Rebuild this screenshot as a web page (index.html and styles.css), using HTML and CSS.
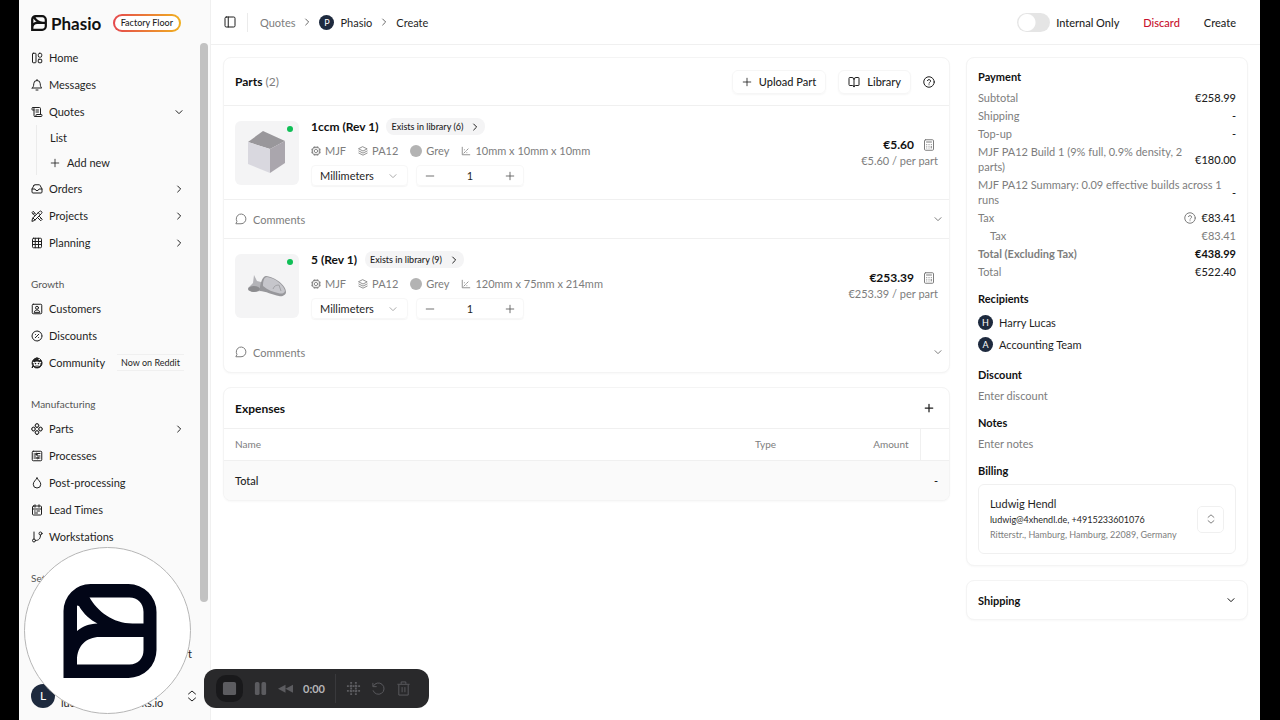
FILE: index.html
```html
<!DOCTYPE html>
<html lang="en">
<head>
    <meta charset="UTF-8">
    <meta name="viewport" content="width=device-width, initial-scale=1.0">
    <title>Create Quote - Phasio</title>
    <link rel="stylesheet" href="styles.css">
</head>
<body>
    <!-- Icon sprite -->
    <svg class="sprite" aria-hidden="true">
        <symbol id="i-logo" viewBox="0 0 93 94"><path fill="currentColor" stroke="none" fill-rule="evenodd" d="M0 94V27A27 27 0 0 1 27 0H65A28 28 0 0 1 93 28V66A28 28 0 0 1 65 94ZM26 13.500C34 27 49 39.500 69 39.500H80V28C80 19 74 13.500 66 13.500ZM13.500 21.500V47C20 42 25 40 34 39.500C27 36 20 30 15.500 22ZM13.500 80.500H66C75 80.500 80 74 80 66V53H36C23 53 13.500 62 13.500 76Z"/></symbol>
        <symbol id="i-home" viewBox="0 0 24 24"><rect x="3" y="2.500" width="7" height="19" rx="1.500"/><rect x="14.500" y="2.500" width="7" height="8" rx="3"/><rect x="14.500" y="14.500" width="7" height="7" rx="1.500"/></symbol>
        <symbol id="i-bell" viewBox="0 0 24 24"><path d="M10 22h4M2.500 18h19c-2-2-3-4-3-8.500a6.500 6.500 0 0 0-13 0c0 4.500-1 6.500-3 8.500ZM12 2.500V1"/></symbol>
        <symbol id="i-scroll" viewBox="0 0 24 24"><path d="M15 12h-5M15 8h-5M19 17V5a2 2 0 0 0-2-2H4"/><path d="M8 21h12a2 2 0 0 0 2-2v-1a1 1 0 0 0-1-1H11a1 1 0 0 0-1 1v1a2 2 0 1 1-4 0V5a2 2 0 1 0-4 0v2a1 1 0 0 0 1 1h3"/></symbol>
        <symbol id="i-inbox" viewBox="0 0 24 24"><path d="M22 12h-6l-2 3h-4l-2-3H2"/><path d="M6 4.500 2 12v6a2 2 0 0 0 2 2h16a2 2 0 0 0 2-2v-6l-4-7.500a2 2 0 0 0-2-1H8a2 2 0 0 0-2 1Z"/></symbol>
        <symbol id="i-tools" viewBox="0 0 24 24"><path d="M9.500 8.500 4.500 2.500 1.800 5.500 7.500 11M14 16l5.500 5.500 3-3L17 13M5 8l1.500-1.500M17 19l1.500-1.500"/><path d="m2 22 1-5.500L17 3a2.800 2.800 0 0 1 4 4L7.500 20.500ZM14.500 5.500l4 4M4 16l4 4"/></symbol>
        <symbol id="i-table" viewBox="0 0 24 24"><rect x="3" y="2.500" width="18" height="19" rx="2"/><path d="M8.500 2.500v19M15 2.500v19M3 9h18M3 15h18"/></symbol>
        <symbol id="i-contact" viewBox="0 0 24 24"><rect x="2.500" y="2.500" width="19" height="19" rx="2"/><circle cx="12" cy="9.500" r="3"/><path d="M6.500 18c1-3 3-4 5.500-4s4.500 1 5.500 4Z"/></symbol>
        <symbol id="i-percent" viewBox="0 0 24 24"><circle cx="12" cy="12" r="10" stroke-dasharray="6.500 1.300"/><path d="m15.500 8.500-7 7M8.800 9h.1M15.200 15h.1"/></symbol>
        <symbol id="i-reddit" viewBox="0 0 24 24"><path fill="currentColor" d="M12 2a10 10 0 1 1-7 17l-3 3 1.500-5A10 10 0 0 1 12 2Z"/><ellipse cx="12" cy="14" rx="7" ry="5" fill="#fff" stroke="none"/><circle cx="5" cy="11" r="1.500" fill="#fff" stroke="none"/><circle cx="19" cy="11" r="1.500" fill="#fff" stroke="none"/><circle cx="16.500" cy="5" r="1.500" fill="#fff" stroke="none"/><circle cx="9" cy="13" r="1.600" fill="currentColor" stroke="none"/><circle cx="15" cy="13" r="1.600" fill="currentColor" stroke="none"/><path d="M9 16.500c2 1.200 4 1.200 6 0" stroke-width="1"/></symbol>
        <symbol id="i-parts" viewBox="0 0 24 24"><rect x="8.800" y="1.800" width="6.400" height="6.400" rx="2" transform="rotate(45 12 5)"/><rect x="8.800" y="15.800" width="6.400" height="6.400" rx="2" transform="rotate(45 12 19)"/><rect x="1.800" y="8.800" width="6.400" height="6.400" rx="2" transform="rotate(45 5 12)"/><rect x="15.800" y="8.800" width="6.400" height="6.400" rx="2" transform="rotate(45 19 12)"/></symbol>
        <symbol id="i-process" viewBox="0 0 24 24"><rect x="2.500" y="2.500" width="19" height="19" rx="2"/><path d="M6 8h4l3 4h5M6 12h3M6 16h5M15 16h3M12 7h6"/><circle cx="13" cy="16" r="1.500"/><circle cx="11" cy="8" r="1.500"/></symbol>
        <symbol id="i-drop" viewBox="0 0 24 24"><path d="M12 2c2 4 7.500 7.500 7.500 12.500a7.500 7.500 0 0 1-15 0C4.500 9.500 10 6 12 2Z"/></symbol>
        <symbol id="i-calendar" viewBox="0 0 24 24"><rect x="3" y="4" width="18" height="18" rx="2"/><path d="M8 1.500v5M16 1.500v5M3 10h18M12 14h5M7 14h1.500M7 18h6"/></symbol>
        <symbol id="i-branch" viewBox="0 0 24 24"><path d="M6 2v14"/><circle cx="19" cy="5" r="3"/><circle cx="6" cy="19" r="3"/><path d="M19 8c0 7-3 11-10 11"/></symbol>
        <symbol id="i-down" viewBox="0 0 24 24"><path d="m3 8 9 9 9-9"/></symbol>
        <symbol id="i-right" viewBox="0 0 24 24"><path d="m8 3 9 9-9 9"/></symbol>
        <symbol id="i-updown" viewBox="0 0 24 24"><path d="m5 8 7-6 7 6M5 16l7 6 7-6"/></symbol>
        <symbol id="i-plus" viewBox="0 0 24 24"><path d="M3 12h18M12 3v18"/></symbol>
        <symbol id="i-minus" viewBox="0 0 24 24"><path d="M3 12h18"/></symbol>
        <symbol id="i-panel" viewBox="0 0 24 24"><rect x="2" y="2" width="20" height="20" rx="2.500"/><path d="M8.500 2v20"/></symbol>
        <symbol id="i-book" viewBox="0 0 24 24"><path d="M12 6.500v15M2 4a1 1 0 0 1 1-1h5a4 4 0 0 1 4 4 4 4 0 0 1 4-4h5a1 1 0 0 1 1 1v14a1 1 0 0 1-1 1h-6a3 3 0 0 0-3 3 3 3 0 0 0-3-3H3a1 1 0 0 1-1-1Z"/></symbol>
        <symbol id="i-help" viewBox="0 0 24 24"><circle cx="12" cy="12" r="10.500"/><path d="M8.800 9.300a3.300 3.300 0 0 1 6.400 1c0 2-3.200 2.500-3.200 4M12 17.500h.1"/></symbol>
        <symbol id="i-chip" viewBox="0 0 24 24"><rect x="4" y="4" width="16" height="16" rx="3"/><circle cx="12" cy="12" r="4"/><path d="M8 1.500V4M12 1.500V4M16 1.500V4M8 20v2.500M12 20v2.500M16 20v2.500M1.500 8H4M1.500 12H4M1.500 16H4M20 8h2.500M20 12h2.500M20 16h2.500"/></symbol>
        <symbol id="i-layers" viewBox="0 0 24 24"><path d="m12 2 10 5-10 5L2 7ZM2 12l10 5 10-5M2 17l10 5 10-5"/></symbol>
        <symbol id="i-axis" viewBox="0 0 24 24"><path d="M3 3v18h18M7 17l2-2M11 13l2-2M15 9l2-2M14 16h.1M8 9h.1"/></symbol>
        <symbol id="i-calc" viewBox="0 0 24 24"><rect x="3" y="1.500" width="18" height="21" rx="2"/><path d="M7 6h10M7.500 11h.1M12 11h.1M16.500 11h.1M7.500 14.500h.1M12 14.500h.1M16.500 14.500V18M7.500 18h.1M12 18h.1"/></symbol>
        <symbol id="i-comment" viewBox="0 0 24 24"><path d="M2.500 21.500h9.500a9.700 9.700 0 1 0-8.500-5.200Z"/></symbol>
    </svg>

    <div class="app">
        <aside class="sidebar">
            <div class="brand">
                <svg class="brand-mark"><use href="#i-logo"/></svg>
                <span class="brand-name">Phasio</span>
                <span class="brand-badge">Factory Floor</span>
            </div>

            <div class="nav-scroll">
                <nav class="nav">
                    <a class="nav-item" href="#"><svg class="icon"><use href="#i-home"/></svg>Home</a>
                    <a class="nav-item" href="#"><svg class="icon"><use href="#i-bell"/></svg>Messages</a>
                    <a class="nav-item" href="#"><svg class="icon"><use href="#i-scroll"/></svg>Quotes<svg class="icon tiny chevron"><use href="#i-down"/></svg></a>
                    <div class="subnav">
                        <a class="subnav-item" href="#">List</a>
                        <a class="subnav-item" href="#"><svg class="icon small"><use href="#i-plus"/></svg>Add new</a>
                    </div>
                    <a class="nav-item" href="#"><svg class="icon"><use href="#i-inbox"/></svg>Orders<svg class="icon tiny chevron"><use href="#i-right"/></svg></a>
                    <a class="nav-item" href="#"><svg class="icon"><use href="#i-tools"/></svg>Projects<svg class="icon tiny chevron"><use href="#i-right"/></svg></a>
                    <a class="nav-item" href="#"><svg class="icon"><use href="#i-table"/></svg>Planning<svg class="icon tiny chevron"><use href="#i-right"/></svg></a>

                    <div class="nav-label">Growth</div>
                    <a class="nav-item" href="#"><svg class="icon"><use href="#i-contact"/></svg>Customers</a>
                    <a class="nav-item" href="#"><svg class="icon"><use href="#i-percent"/></svg>Discounts</a>
                    <a class="nav-item" href="#"><svg class="icon"><use href="#i-reddit"/></svg>Community<span class="nav-badge">Now on Reddit</span></a>

                    <div class="nav-label">Manufacturing</div>
                    <a class="nav-item" href="#"><svg class="icon"><use href="#i-parts"/></svg>Parts<svg class="icon tiny chevron"><use href="#i-right"/></svg></a>
                    <a class="nav-item" href="#"><svg class="icon"><use href="#i-process"/></svg>Processes</a>
                    <a class="nav-item" href="#"><svg class="icon"><use href="#i-drop"/></svg>Post-processing</a>
                    <a class="nav-item" href="#"><svg class="icon"><use href="#i-calendar"/></svg>Lead Times</a>
                    <a class="nav-item" href="#"><svg class="icon"><use href="#i-branch"/></svg>Workstations</a>

                    <div class="nav-label">Settings</div>
                </nav>
                <div class="scrollbar"></div>
            </div>

            <div class="sidebar-footer">
                <a class="support" href="#">Support</a>
                <button class="account" type="button">
                    <span class="avatar avatar-large">L</span>
                    <span class="account-email">lucas.h@partworks.io</span>
                    <svg class="icon"><use href="#i-updown"/></svg>
                </button>
            </div>
        </aside>

        <main class="main">
            <header class="topbar">
                <button class="icon-button" type="button" aria-label="Toggle sidebar"><svg class="icon"><use href="#i-panel"/></svg></button>
                <span class="divider"></span>
                <nav class="breadcrumb">
                    <a class="muted" href="#">Quotes</a>
                    <svg class="icon tiny"><use href="#i-right"/></svg>
                    <a class="crumb-company" href="#"><span class="avatar">P</span>Phasio</a>
                    <svg class="icon tiny"><use href="#i-right"/></svg>
                    <span>Create</span>
                </nav>
                <div class="actions">
                    <label class="toggle"><input type="checkbox">Internal Only</label>
                    <button class="text-button danger" type="button">Discard</button>
                    <button class="text-button" type="button">Create</button>
                </div>
            </header>

            <div class="content">
                <div class="column">
                    <section class="card">
                        <div class="parts-header">
                            <h2>Parts <span class="count">(2)</span></h2>
                            <button class="outline-button" type="button"><svg class="icon small"><use href="#i-plus"/></svg>Upload Part</button>
                            <button class="outline-button" type="button"><svg class="icon"><use href="#i-book"/></svg>Library</button>
                            <button class="icon-button" type="button" aria-label="Help"><svg class="icon"><use href="#i-help"/></svg></button>
                        </div>

                        <article class="part">
                            <div class="thumb">
                                <svg viewBox="0 0 64 64">
                                    <path fill="#99979b" d="M13 21 28 10 50 20 35 28Z"/>
                                    <path fill="#d9d8df" d="M13 21 35 28V52L13 43Z"/>
                                    <path fill="#aaa6ad" d="M35 28 50 20V42L35 52Z"/>
                                </svg>
                                <span class="dot"></span>
                            </div>
                            <div class="part-info">
                                <div class="part-title">
                                    <h3>1ccm (Rev 1)</h3>
                                    <button class="pill" type="button">Exists in library (6)<svg class="icon tiny"><use href="#i-right"/></svg></button>
                                </div>
                                <div class="part-meta">
                                    <span><svg class="icon small"><use href="#i-chip"/></svg>MJF</span>
                                    <span><svg class="icon small"><use href="#i-layers"/></svg>PA12</span>
                                    <span><i class="swatch"></i>Grey</span>
                                    <span><svg class="icon small"><use href="#i-axis"/></svg>10mm x 10mm x 10mm</span>
                                </div>
                                <div class="part-controls">
                                    <div class="select">
                                        <select aria-label="Units"><option>Millimeters</option><option>Inches</option></select>
                                        <svg class="icon tiny"><use href="#i-down"/></svg>
                                    </div>
                                    <div class="stepper">
                                        <button type="button" aria-label="Decrease"><svg class="icon small"><use href="#i-minus"/></svg></button>
                                        <input type="text" value="1" aria-label="Quantity">
                                        <button type="button" aria-label="Increase"><svg class="icon small"><use href="#i-plus"/></svg></button>
                                    </div>
                                </div>
                            </div>
                            <div class="price">
                                <div class="price-total">€5.60<svg class="icon"><use href="#i-calc"/></svg></div>
                                <div class="price-unit">€5.60 / per part</div>
                            </div>
                        </article>
                        <button class="comments bordered" type="button"><svg class="icon"><use href="#i-comment"/></svg>Comments<svg class="icon tiny"><use href="#i-down"/></svg></button>

                        <article class="part">
                            <div class="thumb">
                                <svg viewBox="0 0 64 64">
                                    <path fill="#b4b4b8" d="M13 34 18 29 19 21 22 27 30 29 26 37 17 38Z"/>
                                    <ellipse cx="19" cy="35" rx="6" ry="3" fill="#8c8c8f"/>
                                    <path fill="#97979b" d="M25 33C26 27 28 22 31 22C40 23 51 31 51 38C51 41 47 43 44 42C38 41 30 37 25 37Z"/>
                                    <path fill="#c6c6cb" d="M28 32C28 27 29 23 32 23C40 24 49 31 50 37C49 40 46 40 43 39C38 38 33 36 28 32Z"/>
                                    <path fill="none" stroke="#a3a3a7" d="M38 35C39 32 41 31 44 31L46 37"/>
                                </svg>
                                <span class="dot"></span>
                            </div>
                            <div class="part-info">
                                <div class="part-title">
                                    <h3>5 (Rev 1)</h3>
                                    <button class="pill" type="button">Exists in library (9)<svg class="icon tiny"><use href="#i-right"/></svg></button>
                                </div>
                                <div class="part-meta">
                                    <span><svg class="icon small"><use href="#i-chip"/></svg>MJF</span>
                                    <span><svg class="icon small"><use href="#i-layers"/></svg>PA12</span>
                                    <span><i class="swatch"></i>Grey</span>
                                    <span><svg class="icon small"><use href="#i-axis"/></svg>120mm x 75mm x 214mm</span>
                                </div>
                                <div class="part-controls">
                                    <div class="select">
                                        <select aria-label="Units"><option>Millimeters</option><option>Inches</option></select>
                                        <svg class="icon tiny"><use href="#i-down"/></svg>
                                    </div>
                                    <div class="stepper">
                                        <button type="button" aria-label="Decrease"><svg class="icon small"><use href="#i-minus"/></svg></button>
                                        <input type="text" value="1" aria-label="Quantity">
                                        <button type="button" aria-label="Increase"><svg class="icon small"><use href="#i-plus"/></svg></button>
                                    </div>
                                </div>
                            </div>
                            <div class="price">
                                <div class="price-total">€253.39<svg class="icon"><use href="#i-calc"/></svg></div>
                                <div class="price-unit">€253.39 / per part</div>
                            </div>
                        </article>
                        <button class="comments" type="button"><svg class="icon"><use href="#i-comment"/></svg>Comments<svg class="icon tiny"><use href="#i-down"/></svg></button>
                    </section>

                    <section class="card">
                        <div class="expenses-header">
                            <h2>Expenses</h2>
                            <button class="icon-button" type="button" aria-label="Add expense"><svg class="icon small bold"><use href="#i-plus"/></svg></button>
                        </div>
                        <table class="expenses">
                            <thead>
                                <tr><th>Name</th><th class="col-type">Type</th><th class="col-amount">Amount</th><th class="col-action"></th></tr>
                            </thead>
                            <tfoot>
                                <tr><td colspan="2">Total</td><td class="col-total" colspan="2">-</td></tr>
                            </tfoot>
                        </table>
                    </section>
                </div>

                <div class="column side">
                    <section class="card summary">
                        <h4>Payment</h4>
                        <dl class="payment">
                            <div><dt>Subtotal</dt><dd>€258.99</dd></div>
                            <div><dt>Shipping</dt><dd>-</dd></div>
                            <div><dt>Top-up</dt><dd>-</dd></div>
                            <div><dt>MJF PA12 Build 1 (9% full, 0.9% density, 2 parts)</dt><dd>€180.00</dd></div>
                            <div><dt>MJF PA12 Summary: 0.09 effective builds across 1 runs</dt><dd>-</dd></div>
                            <div><dt>Tax</dt><dd><svg class="icon"><use href="#i-help"/></svg>€83.41</dd></div>
                            <div class="sub"><dt>Tax</dt><dd>€83.41</dd></div>
                            <div class="strong"><dt>Total (Excluding Tax)</dt><dd>€438.99</dd></div>
                            <div><dt>Total</dt><dd>€522.40</dd></div>
                        </dl>

                        <h4>Recipients</h4>
                        <ul class="recipients">
                            <li><span class="avatar">H</span>Harry Lucas</li>
                            <li><span class="avatar">A</span>Accounting Team</li>
                        </ul>

                        <h4><label for="discount">Discount</label></h4>
                        <input class="plain-input" id="discount" type="text" placeholder="Enter discount">

                        <h4><label for="notes">Notes</label></h4>
                        <input class="plain-input" id="notes" type="text" placeholder="Enter notes">

                        <h4>Billing</h4>
                        <div class="billing">
                            <div class="billing-text">
                                <div class="billing-name">Ludwig Hendl</div>
                                <div>ludwig@4xhendl.de, +4915233601076</div>
                                <div class="muted">Ritterstr., Hamburg, Hamburg, 22089, Germany</div>
                            </div>
                            <button class="square-button" type="button" aria-label="Change billing address"><svg class="icon small"><use href="#i-updown"/></svg></button>
                        </div>
                    </section>

                    <button class="card shipping" type="button">Shipping<svg class="icon tiny"><use href="#i-down"/></svg></button>
                </div>
            </div>
        </main>
    </div>

    <!-- Camera bubble and recorder controls float over the page -->
    <div class="bubble"><svg><use href="#i-logo"/></svg></div>

    <div class="recorder">
        <button class="stop" type="button" aria-label="Stop"><svg viewBox="0 0 16 16"><rect x="1" y="1" width="14" height="14" rx="2"/></svg></button>
        <button type="button" aria-label="Pause"><svg viewBox="0 0 16 16"><rect x="2" y="1" width="5" height="14" rx="2"/><rect x="9" y="1" width="5" height="14" rx="2"/></svg></button>
        <button type="button" aria-label="Rewind"><svg viewBox="0 0 16 16"><path d="M8 4v8.500L0 8.200ZM16 4v8.500L8 8.200Z"/></svg></button>
        <span class="time">0:00</span>
        <span class="recorder-divider"></span>
        <button type="button" aria-label="Effects"><svg viewBox="0 0 16 16"><path class="line dots" d="M5.500 1v14M10.500 1v14M1 5.500h14M1 10.500h14"/></svg></button>
        <button type="button" aria-label="Restart"><svg viewBox="0 0 16 16"><path class="line" d="M2 2v4h4M2.500 5.500a6 6 0 1 1-.3 4.500"/></svg></button>
        <button type="button" aria-label="Delete"><svg viewBox="0 0 16 16"><path class="line" d="M1.500 3.500h13M5.500 3V1h5v2M3 4v11h10V4M6.500 6.500v5.500M9.500 6.500v5.500"/></svg></button>
    </div>
</body>
</html>
```

FILE: styles.css
```css
* {
    box-sizing: border-box;
}
body {
    margin: 0;
    padding: 0 20px 0 19px;
    height: 100vh;
    overflow: hidden;
    background-color: #000;
    font-family: Lato, "Liberation Sans", sans-serif;
    font-size: 11px;
    line-height: 15px;
    color: #1f1f1f;
}
h2, h3, h4, dl, dd, ul {
    margin: 0;
    padding: 0;
}
a {
    color: inherit;
    text-decoration: none;
}
button, input, select {
    font: inherit;
    color: inherit;
    background: none;
    border: none;
    padding: 0;
    margin: 0;
}
button {
    cursor: pointer;
}
.sprite {
    display: none;
}
.icon {
    width: 12px;
    height: 12px;
    flex: none;
    display: block;
    fill: none;
    stroke: currentColor;
    stroke-width: 2;
    stroke-linecap: round;
    stroke-linejoin: round;
}
.icon.small {
    width: 10px;
    height: 10px;
}
.icon.tiny {
    width: 8px;
    height: 8px;
    stroke-width: 3;
}
.icon.bold {
    stroke-width: 3;
}
.muted {
    color: #7d7d7d;
}
.app {
    display: flex;
    height: 100%;
    background-color: #fff;
}

/* Sidebar */
.sidebar {
    width: 192px;
    flex: none;
    display: flex;
    flex-direction: column;
    background-color: #fafafa;
    border-right: 1px solid #f0f0f0;
}
.brand {
    display: flex;
    align-items: center;
    height: 42px;
    padding: 4px 12px 0;
}
.brand-mark {
    width: 16px;
    height: 16px;
    color: #111;
}
.brand-name {
    margin-left: 4px;
    font-size: 17px;
    font-weight: 700;
    color: #111;
}
.brand-badge {
    margin-left: auto;
    margin-right: 17px;
    padding: 0 6px;
    border: 2px solid transparent;
    border-radius: 10px;
    background: linear-gradient(#fff, #fff) padding-box, linear-gradient(90deg, #e5484d, #f0b020) border-box;
    font-size: 9px;
    line-height: 14px;
    font-weight: 500;
}
.nav-scroll {
    flex: 1;
    min-height: 0;
    display: flex;
    overflow: hidden;
}
.nav {
    flex: 1;
    padding: 2px 16px 0 12px;
}
.nav-item {
    display: flex;
    align-items: center;
    gap: 6px;
    height: 27px;
}
.chevron {
    margin-left: auto;
    margin-right: 1px;
}
.subnav {
    margin-left: 5px;
    border-left: 1px solid #ebebeb;
}
.subnav-item {
    display: flex;
    align-items: center;
    gap: 7px;
    height: 25px;
    padding-left: 13px;
}
.nav-label {
    height: 39px;
    padding-top: 21px;
    font-size: 10px;
    color: #555;
}
.nav-badge {
    margin-left: auto;
    padding: 0 4px;
    border-top: 1px solid #f0f0f0;
    border-bottom: 1px solid #f0f0f0;
    font-size: 9px;
    white-space: nowrap;
}
.scrollbar {
    width: 8px;
    height: 559px;
    margin: 1px 2px 0 0;
    border-radius: 4px;
    background-color: #c2c2c2;
}
.sidebar-footer {
    flex: none;
    padding: 6px 12px 10px;
}
.support {
    display: block;
    text-align: right;
    padding: 0 6px;
}
.account {
    display: flex;
    align-items: center;
    width: 100%;
    margin-top: 20px;
    text-align: left;
}
.account-email {
    flex: 1;
    padding: 14px 0 0 6px;
}
.avatar {
    display: flex;
    align-items: center;
    justify-content: center;
    flex: none;
    width: 15px;
    height: 15px;
    border-radius: 50%;
    background-color: #1e2a3e;
    color: #fff;
    font-size: 9px;
}
.avatar-large {
    width: 24px;
    height: 24px;
    font-size: 12px;
}

/* Top bar */
.main {
    flex: 1;
    min-width: 0;
}
.topbar {
    display: flex;
    align-items: center;
    height: 45px;
    padding: 0 24px 0 13px;
    border-bottom: 1px solid #f0f0f0;
}
.divider {
    width: 1px;
    height: 19px;
    margin: 0 12px 0 11px;
    background-color: #ebebeb;
}
.breadcrumb {
    display: flex;
    align-items: center;
    gap: 8px;
}
.breadcrumb .tiny {
    color: #666;
}
.crumb-company {
    display: flex;
    align-items: center;
    gap: 6px;
}
.actions {
    display: flex;
    align-items: center;
    gap: 24px;
    margin-left: auto;
    font-weight: 500;
}
.toggle {
    display: flex;
    align-items: center;
    gap: 6px;
}
.toggle input {
    appearance: none;
    width: 33px;
    height: 19px;
    border-radius: 10px;
    background: radial-gradient(circle at 10px 50%, #fff 8px, #e5e5e5 9px);
}
.danger {
    color: #c8102e;
}

/* Content */
.content {
    display: flex;
    align-items: flex-start;
    gap: 16px;
    padding: 12px 12px 0;
}
.column {
    flex: 1;
    min-width: 0;
    display: flex;
    flex-direction: column;
    gap: 14px;
}
.side {
    flex: 0 0 282px;
}
.card {
    border: 1px solid #f4f4f4;
    border-radius: 8px;
    background-color: #fff;
    box-shadow: 0 1px 2px rgba(0,0,0,0.03);
    overflow: hidden;
}
h2 {
    flex: 1;
    font-size: 12px;
    font-weight: 700;
    color: #111;
}
.count {
    font-weight: 400;
    color: #7d7d7d;
}
.parts-header {
    display: flex;
    align-items: center;
    gap: 12px;
    height: 48px;
    padding: 0 14px 0 11px;
    border-bottom: 1px solid #f0f0f0;
}
.outline-button {
    display: flex;
    align-items: center;
    gap: 7px;
    height: 24px;
    padding: 0 9px;
    border: 1px solid #f6f6f6;
    border-radius: 6px;
    box-shadow: 0 1px 2px rgba(0,0,0,0.04);
    font-weight: 500;
}
.part {
    display: flex;
    gap: 12px;
    height: 93px;
    padding: 15px 11px 0;
}
.thumb {
    position: relative;
    width: 64px;
    height: 64px;
    border-radius: 6px;
    background-color: #f4f4f5;
}
.dot {
    position: absolute;
    top: 5px;
    right: 6px;
    width: 6px;
    height: 6px;
    border-radius: 50%;
    background-color: #0fbf56;
}
.part-info {
    flex: 1;
}
.part-title, .part-meta, .part-controls {
    display: flex;
    align-items: center;
}
.part-title {
    gap: 8px;
    margin-top: -3px;
}
h3 {
    font-size: 12px;
    font-weight: 700;
    color: #111;
}
.pill {
    display: flex;
    align-items: center;
    gap: 8px;
    height: 17px;
    padding: 0 6px 0 5px;
    border-radius: 8px;
    background-color: #f4f4f5;
    font-size: 9px;
    font-weight: 500;
}
.part-meta {
    gap: 12px;
    margin-top: 8px;
    color: #7d7d7d;
}
.part-meta span {
    display: flex;
    align-items: center;
    gap: 4px;
}
.swatch {
    width: 12px;
    height: 12px;
    border-radius: 50%;
    background-color: #b3b3b3;
}
.part-controls {
    gap: 8px;
    margin-top: 7px;
}
.select, .stepper {
    display: flex;
    align-items: center;
    height: 21px;
    border: 1px solid #f7f7f7;
    border-radius: 4px;
    box-shadow: 0 1px 1px rgba(0,0,0,0.04);
}
.select {
    width: 97px;
    padding: 0 10px 0 8px;
}
.select select {
    appearance: none;
    flex: 1;
    min-width: 0;
}
.select .icon {
    color: #aaa;
}
.stepper {
    width: 108px;
    padding: 0 8px;
}
.stepper input {
    flex: 1;
    min-width: 0;
    text-align: center;
}
.stepper button {
    color: #555;
}
.price {
    text-align: right;
    padding-top: 15px;
}
.price-total {
    display: flex;
    align-items: center;
    justify-content: flex-end;
    gap: 9px;
    padding-right: 3px;
    font-size: 12px;
    line-height: 17px;
    font-weight: 700;
    color: #111;
}
.price-total .icon, .price-unit {
    color: #7d7d7d;
}
.comments {
    display: flex;
    align-items: center;
    gap: 6px;
    width: 100%;
    height: 40px;
    padding: 0 7px 0 11px;
    color: #7d7d7d;
}
.comments.bordered {
    border-top: 1px solid #f0f0f0;
    border-bottom: 1px solid #f0f0f0;
}
.comments .tiny {
    margin-left: auto;
}

/* Expenses */
.expenses-header {
    display: flex;
    align-items: center;
    height: 40px;
    padding: 0 15px 0 11px;
}
.expenses {
    width: 100%;
    border-collapse: collapse;
    table-layout: fixed;
}
.expenses th {
    height: 32px;
    padding: 0 11px;
    border-top: 1px solid #f0f0f0;
    border-bottom: 1px solid #f0f0f0;
    font-size: 10px;
    font-weight: 400;
    color: #7d7d7d;
    text-align: left;
}
.expenses .col-type {
    width: 104px;
}
.expenses .col-amount {
    width: 72px;
    text-align: right;
}
.expenses .col-action {
    width: 29px;
    border-left: 1px solid #f0f0f0;
}
.expenses td {
    height: 39px;
    padding: 0 11px;
    background-color: #fafafa;
    font-weight: 500;
}
.expenses .col-total {
    text-align: right;
}

/* Summary */
.summary {
    padding: 11px 11px 11px;
}
h4 {
    font-size: 11px;
    font-weight: 700;
    color: #111;
}
.payment {
    display: flex;
    flex-direction: column;
    gap: 3px;
    margin: 6px 0 12px;
}
.payment div {
    display: flex;
    align-items: center;
    justify-content: space-between;
    gap: 9px;
}
.payment dt {
    color: #7d7d7d;
}
.payment dd {
    display: flex;
    align-items: center;
    gap: 6px;
    font-weight: 500;
}
.payment .icon {
    color: #7d7d7d;
}
.payment .sub {
    padding-left: 12px;
}
.payment .sub dd {
    font-weight: 400;
    color: #7d7d7d;
}
.payment .strong dt, .payment .strong dd {
    font-weight: 700;
}
.payment .strong dd {
    color: #111;
}
.recipients {
    display: flex;
    flex-direction: column;
    gap: 7px;
    margin: 9px 0 15px;
    list-style: none;
}
.recipients li {
    display: flex;
    align-items: center;
    gap: 6px;
}
.plain-input {
    display: block;
    width: 100%;
    height: 15px;
    margin: 6px 0 12px;
}
.plain-input::placeholder {
    color: #7d7d7d;
    opacity: 1;
}
.billing {
    display: flex;
    align-items: center;
    margin-top: 6px;
    padding: 11px;
    border: 1px solid #f0f0f0;
    border-radius: 6px;
    font-size: 9px;
}
.billing-text {
    flex: 1;
}
.billing-name {
    margin-bottom: 1px;
    font-size: 11px;
}
.square-button {
    display: flex;
    align-items: center;
    justify-content: center;
    width: 27px;
    height: 27px;
    border: 1px solid #f0f0f0;
    border-radius: 5px;
    color: #666;
}
.shipping {
    display: flex;
    align-items: center;
    justify-content: space-between;
    height: 40px;
    padding: 0 12px 0 11px;
    font-weight: 700;
    color: #111;
}

/* Overlays */
.bubble {
    position: fixed;
    left: 24px;
    bottom: 6px;
    display: flex;
    align-items: center;
    justify-content: center;
    width: 167px;
    height: 167px;
    padding-left: 4px;
    border: 1px solid #b5b5b5;
    border-radius: 50%;
    background-color: #fff;
    color: #020617;
}
.bubble svg {
    width: 94px;
    height: 94px;
}
.recorder {
    position: fixed;
    left: 204px;
    bottom: 12px;
    display: flex;
    align-items: center;
    gap: 10px;
    height: 39px;
    padding: 0 18px 0 12px;
    border-radius: 12px;
    background-color: #29292b;
}
.recorder button {
    color: #5c5c60;
}
.recorder svg {
    display: block;
    width: 15px;
    height: 15px;
    fill: currentColor;
}
.recorder .line {
    fill: none;
    stroke: currentColor;
    stroke-width: 1;
}
.recorder .dots {
    stroke-width: 2;
    stroke-dasharray: 2 1;
}
.recorder .stop {
    padding: 6px;
    border-radius: 10px;
    background-color: #19191b;
}
.recorder-divider {
    width: 1px;
    height: 29px;
    background-color: #39393c;
}
.time {
    font-weight: 700;
    color: #b5b5b8;
}
```
